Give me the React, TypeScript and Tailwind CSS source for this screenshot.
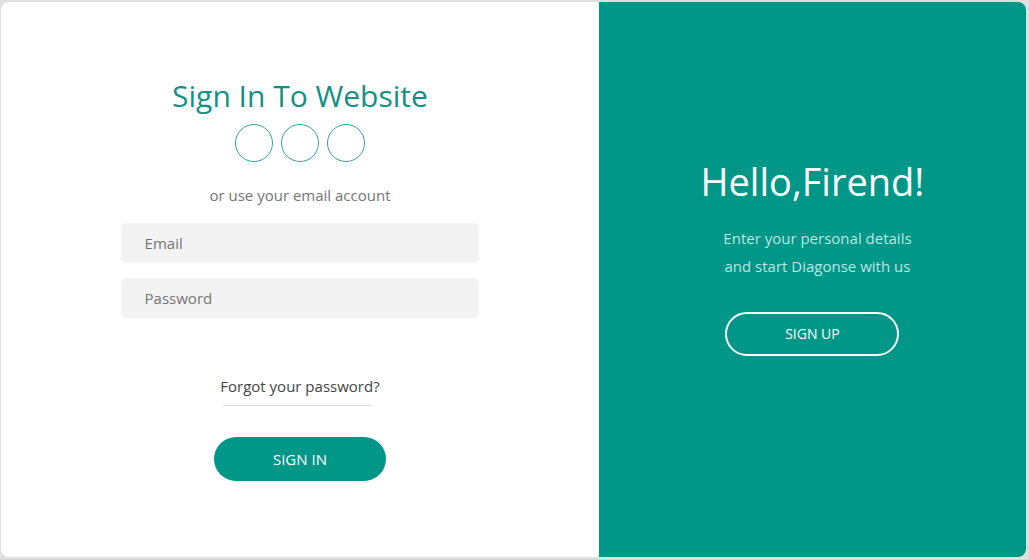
export default function App() {
  return (
    <div className="flex min-h-screen bg-[#e0e0e0] pt-0.5 pr-[3px] pb-0.5 pl-px font-['Open_Sans',sans-serif]">
      <main className="flex flex-1 overflow-hidden rounded-lg bg-white">
        <section className="flex flex-[7] flex-col items-center pt-[74px]">
          <h1 className="text-[30px] leading-10 text-[#129186]">Sign In To Website</h1>
          <div className="mt-2 flex gap-2">
            <a href="#one" aria-label="Sign in with first provider" className="size-[38px] rounded-full border border-[#35a298]" />
            <a href="#two" aria-label="Sign in with second provider" className="size-[38px] rounded-full border border-[#35a298]" />
            <a href="#three" aria-label="Sign in with third provider" className="size-[38px] rounded-full border border-[#35a298]" />
          </div>
          <p className="mt-[21px] text-[15px] leading-6 text-[#757575]">or use your email account</p>
          <form className="flex w-[60%] flex-col items-center">
            <input aria-label="Email" type="email" placeholder="Email" className="mt-4 h-10 w-full rounded-[5px] bg-[#f3f3f3] px-6 text-[15px] placeholder:text-[#757575]" />
            <input aria-label="Password" type="password" placeholder="Password" className="mt-[15px] h-10 w-full rounded-[5px] bg-[#f3f3f3] px-6 text-[15px] placeholder:text-[#757575]" />
            <a href="#forgot" className="mt-14 text-[15px] leading-6 text-[#444]">Forgot your password?</a>
            <hr className="mt-[7px] mr-1.5 w-[148px] border-[#ddd]" />
            <button type="button" className="mt-[31px] h-11 w-[172px] rounded-full bg-[#009688] text-[15px] font-medium text-white">SIGN IN</button>
          </form>
        </section>
        <section className="flex flex-[5] flex-col items-center bg-[#009688] pt-[154px] text-white">
          <h2 className="text-[38px] leading-[50px]">Hello,Firend!</h2>
          <p className="mt-[18px] pl-2.5 text-center text-[15px] leading-7 text-[#bfe5e1]">Enter your personal details<br />and start Diagonse with us</p>
          <button type="button" className="mt-8 h-11 w-[174px] rounded-full border-2 border-white text-sm font-medium">SIGN UP</button>
        </section>
      </main>
    </div>
  );
}
